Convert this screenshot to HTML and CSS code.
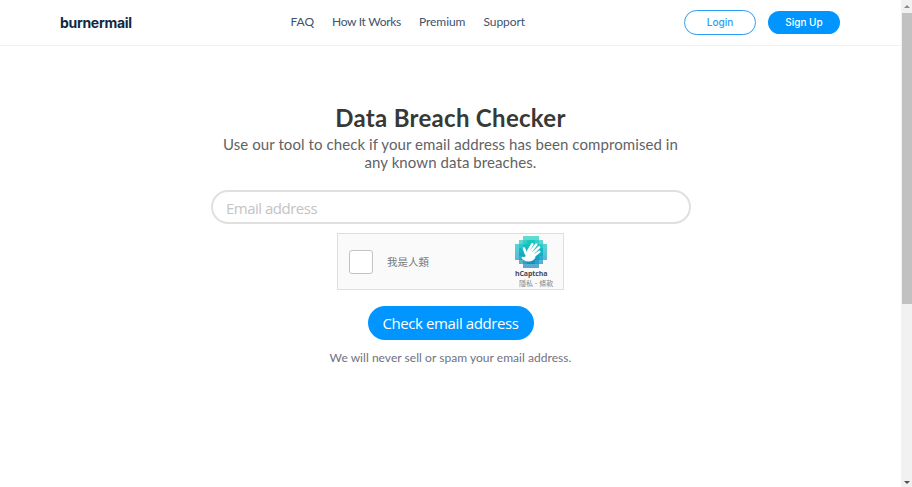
FILE: index.html
```
<!DOCTYPE html>
<html lang="en">

<head>
    <meta charset="UTF-8">
    <meta name="viewport" content="width=device-width, initial-scale=1.0">
    <title>Data Breach Checker - Burner Mail</title>
    <link rel="stylesheet" href="styles.css">
</head>

<body>
    <div class="page">
        <header class="navbar">
            <a class="logo" href="#">burnermail</a>
            <nav class="nav-links">
                <a class="link-faq" href="#">FAQ</a>
                <a class="link-how" href="#">How It Works</a>
                <a class="link-premium" href="#">Premium</a>
                <a class="link-support" href="#">Support</a>
            </nav>
            <div class="nav-buttons">
                <a class="btn-login" href="#">Login</a>
                <a class="btn-signup" href="#">Sign Up</a>
            </div>
        </header>
        <main>
            <h1>Data Breach Checker</h1>
            <p class="subtitle">Use our tool to check if your email address has been compromised in<br>any known data breaches.</p>
            <form>
                <input type="email" class="email" placeholder="Email address">
                <div class="captcha">
                    <span class="checkbox"></span>
                    <span class="captcha-label">我是人類</span>
                    <div class="captcha-brand">
                        <svg width="32" height="32" viewBox="0 0 32 32">
                            <defs>
                                <linearGradient id="teal" gradientUnits="userSpaceOnUse" x1="0" y1="0" x2="0" y2="32">
                                    <stop offset="0" stop-color="#1fd0c0" />
                                    <stop offset="0.5" stop-color="#12b4c3" />
                                    <stop offset="1" stop-color="#1680bd" />
                                </linearGradient>
                            </defs>
                            <g fill="url(#teal)">
                                <path opacity="0.7" d="M8 0h16v4h4v4h4v16h-4v4h-4v4H8v-4H4v-4H0V8h4V4h4z" />
                                <path d="M12 4h8v4h4v4h4v8h-4v4h-4v4h-8v-4H8v-4H4v-8h4V8h4z" />
                                <path opacity="0.6" d="M8 4h16v4h4v16h-4v4H8v-4H4V8h4z" />
                            </g>
                            <g fill="none" stroke="#fff" stroke-linecap="round" stroke-width="2.5">
                                <path d="M11 18L9 12.500" />
                                <path d="M12.700 16L17.300 8.200" />
                                <path d="M15 16.500L21.300 8.500" />
                                <path d="M17 18L24 11.300" />
                                <path d="M18 20.500L24.300 15.800" />
                            </g>
                            <path fill="#fff" d="M9.800 15l2.300 1.400 2-2.700 5.200 3 1.200 4.600c-1.500 3-3.800 4.200-6.800 4.200-3.500 0-5.800-1.300-7.400-4l1.800-.8c1.200.5 2.200.2 2.600-.6z" />
                        </svg>
                        <b>hCaptcha</b>
                        <small>隱私 - 條款</small>
                    </div>
                </div>
                <button type="button" class="submit">Check email address</button>
            </form>
            <p class="note">We will never sell or spam your email address.</p>
        </main>
    </div>
    <div class="scrollbar">
        <i class="arrow up"></i>
        <div class="thumb"></div>
        <i class="arrow down"></i>
    </div>
</body>

</html>
```
FILE: styles.css
```
* {
    box-sizing: border-box;
    margin: 0;
    padding: 0;
}

body {
    display: flex;
    height: 487px;
    overflow: hidden;
    background-color: #fff;
    font-family: Lato, "Noto Sans CJK TC", sans-serif;
}

a {
    text-decoration: none;
}

.page {
    width: 901px;
}

.navbar {
    display: grid;
    grid-template-columns: 230.5px 1fr 157px;
    align-items: center;
    height: 46px;
    padding: 0 60px;
    border-bottom: 1px solid #f2f2f2;
}

.logo {
    font-family: Inter, sans-serif;
    font-size: 14px;
    font-weight: 700;
    letter-spacing: -0.3px;
    color: #0f2941;
}

.nav-links {
    display: flex;
    gap: 18px;
    padding-bottom: 2px;
}

.nav-links a {
    font-size: 12px;
    letter-spacing: -0.05px;
    color: #42526b;
    white-space: nowrap;
}

.nav-links .link-how {
    letter-spacing: -0.3px;
}

.nav-buttons {
    display: flex;
    align-items: center;
    gap: 12px;
}

.nav-buttons a {
    width: 72px;
    height: 25px;
    border: 1px solid #2a9df4;
    border-radius: 13px;
    font-family: Inter, sans-serif;
    font-size: 10px;
    font-weight: 500;
    line-height: 23px;
    text-align: center;
    color: #2a9df4;
}

.nav-buttons .btn-signup {
    height: 23px;
    border: 0;
    background-color: #0095ff;
    color: #fff;
}

main {
    display: flex;
    flex-direction: column;
    align-items: center;
    padding-top: 57px;
}

h1 {
    font-size: 24px;
    line-height: 30px;
    letter-spacing: 0.3px;
    color: #363936;
}

.subtitle {
    margin-top: 2px;
    font-size: 15px;
    line-height: 18px;
    letter-spacing: 0.08px;
    text-align: center;
    white-space: nowrap;
    color: #626266;
}

form {
    display: flex;
    flex-direction: column;
    align-items: center;
}

.email {
    width: 480px;
    height: 34px;
    margin-top: 19px;
    padding: 1px 13.5px 0;
    border: 2px solid #e0e0e0;
    border-radius: 17px;
    font-family: "Open Sans", sans-serif;
    font-size: 15px;
    letter-spacing: -0.5px;
}

.email::placeholder {
    color: #c4c4c4;
}

.captcha {
    display: flex;
    align-items: center;
    width: 227px;
    height: 57px;
    margin-top: 9px;
    padding-left: 11px;
    border: 1px solid #dedede;
    background-color: #fafafa;
}

.checkbox {
    width: 24px;
    height: 24px;
    border: 1px solid #c2c2c2;
    border-radius: 3px;
    background-color: #fff;
}

.captcha-label {
    margin-left: 14px;
    font-size: 10.5px;
    color: #777;
}

.captcha-brand {
    display: flex;
    flex-direction: column;
    width: 40px;
    height: 53px;
    margin-left: auto;
    margin-right: 8px;
}

.captcha-brand svg {
    display: block;
    flex: none;
    margin-top: 1px;
}

.captcha-brand b {
    font-family: "Open Sans", sans-serif;
    font-size: 7px;
    line-height: 11px;
    letter-spacing: -0.1px;
    color: #484852;
}

.captcha-brand small {
    padding-left: 4px;
    font-size: 7px;
    line-height: 8px;
    white-space: nowrap;
    color: #888;
}

.submit {
    width: 166px;
    height: 34px;
    margin-top: 16px;
    border: 0;
    border-radius: 17px;
    background-color: #0095ff;
    font-family: "Open Sans", sans-serif;
    font-size: 15px;
    letter-spacing: -0.4px;
    color: #fff;
}

.note {
    margin-top: 10px;
    font-size: 12px;
    line-height: 16px;
    letter-spacing: 0.04px;
    color: #6f7280;
}

.scrollbar {
    display: flex;
    flex-direction: column;
    align-items: center;
    width: 11px;
    height: 487px;
    background-color: #f1f1f1;
}

.thumb {
    width: 10px;
    height: 291px;
    margin-top: 5px;
    background-color: #c1c1c1;
}

.arrow {
    border: 3px solid transparent;
}

.up {
    margin-top: 2px;
    border-bottom-color: #8a8a8a;
}

.down {
    margin-top: auto;
    border-top-color: #505050;
}
```
